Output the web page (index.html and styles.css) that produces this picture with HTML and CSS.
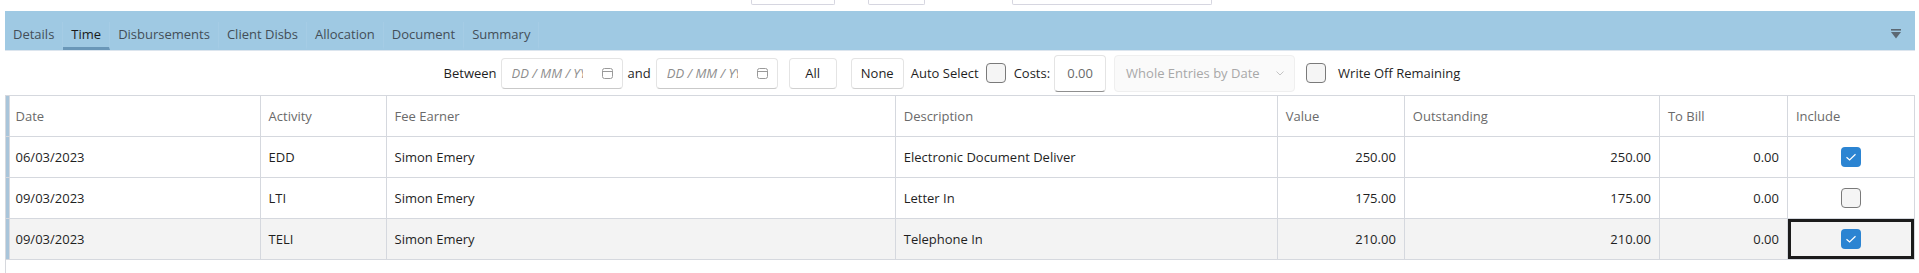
FILE: index.html
```html
<!DOCTYPE html>
<html>
<head>
<meta charset="utf-8">
<link rel="stylesheet" href="styles.css">
</head>
<body>
<div class="page">
  <div class="topstrip">
    <span class="stub s1"></span><span class="stub s2"></span><span class="stub s3"></span>
  </div>
  <div class="tabbar">
    <nav class="tabs">
      <span class="tab">Details</span>
      <span class="tab active">Time</span>
      <span class="tab">Disbursements</span>
      <span class="tab">Client Disbs</span>
      <span class="tab">Allocation</span>
      <span class="tab">Document</span>
      <span class="tab">Summary</span>
    </nav>
    <svg class="menu-icon" width="10" height="10" viewBox="0 0 10 10"><rect x="0" y="0" width="10" height="1.6" fill="#5c6873"/><polygon points="0,3 10,3 5,9.5" fill="#5c6873"/></svg>
  </div>
  <div class="toolbar">
    <span class="lbl l-between">Between</span>
    <span class="date-input d1"><span class="ph">DD / MM / YYYY</span><svg class="cal" width="11" height="11" viewBox="0 0 11 11"><rect x="0.5" y="0.5" width="10" height="10" rx="2" fill="none" stroke="#9a9a9a"/><line x1="0.5" y1="3.5" x2="10.5" y2="3.5" stroke="#9a9a9a"/></svg></span>
    <span class="lbl l-and">and</span>
    <span class="date-input d2"><span class="ph">DD / MM / YYYY</span><svg class="cal" width="11" height="11" viewBox="0 0 11 11"><rect x="0.5" y="0.5" width="10" height="10" rx="2" fill="none" stroke="#9a9a9a"/><line x1="0.5" y1="3.5" x2="10.5" y2="3.5" stroke="#9a9a9a"/></svg></span>
    <button class="btn b-all">All</button>
    <button class="btn b-none">None</button>
    <span class="lbl l-auto">Auto Select</span>
    <span class="box tb-box auto-box"></span>
    <span class="lbl l-costs">Costs:</span>
    <span class="num-input">0.00</span>
    <span class="select">Whole Entries by Date<svg class="chev" width="8" height="5" viewBox="0 0 8 5"><polyline points="0.5,0.5 4,4 7.5,0.5" fill="none" stroke="#c4c4c4"/></svg></span>
    <span class="box tb-box wo-box"></span>
    <span class="lbl l-wo">Write Off Remaining</span>
  </div>
  <div class="grid">
    <table>
      <colgroup>
        <col class="c-ind"><col class="c-date"><col class="c-act"><col class="c-fee"><col class="c-desc"><col class="c-val"><col class="c-out"><col class="c-bill"><col class="c-inc">
      </colgroup>
      <thead>
        <tr><th class="ind"></th><th class="first">Date</th><th>Activity</th><th>Fee Earner</th><th>Description</th><th>Value</th><th>Outstanding</th><th>To Bill</th><th>Include</th></tr>
      </thead>
      <tbody>
        <tr><td class="ind"></td><td class="first">06/03/2023</td><td>EDD</td><td>Simon Emery</td><td>Electronic Document Deliver</td><td class="num">250.00</td><td class="num">250.00</td><td class="num">0.00</td><td class="inc"><span class="box checked"><svg width="20" height="20" viewBox="0 0 20 20"><polyline points="5.5,10.2 8.6,13 14.5,7.2" fill="none" stroke="#fff" stroke-width="1.2"/></svg></span></td></tr>
        <tr><td class="ind"></td><td class="first">09/03/2023</td><td>LTI</td><td>Simon Emery</td><td>Letter In</td><td class="num">175.00</td><td class="num">175.00</td><td class="num">0.00</td><td class="inc"><span class="box"></span></td></tr>
        <tr class="hover"><td class="ind"></td><td class="first">09/03/2023</td><td>TELI</td><td>Simon Emery</td><td>Telephone In</td><td class="num">210.00</td><td class="num">210.00</td><td class="num">0.00</td><td class="inc focus"><span class="box checked"><svg width="20" height="20" viewBox="0 0 20 20"><polyline points="5.5,10.2 8.6,13 14.5,7.2" fill="none" stroke="#fff" stroke-width="1.2"/></svg></span></td></tr>
      </tbody>
    </table>
  </div>
</div>
</body>
</html>
```
FILE: styles.css
```css
html, body {
  margin: 0;
  background: #fff;
}
body {
  font-family: "Open Sans", "Noto Sans", sans-serif;
  font-size: 13px;
  color: #1f1f1f;
}
.page {
  padding: 0 4px 0 5px;
}
.topstrip {
  height: 11px;
  display: flex;
  align-items: flex-start;
}
.stub {
  display: block;
  height: 5px;
  box-sizing: border-box;
  border: 1px solid #d6d6e0;
  border-top: none;
  border-radius: 0 0 2px 2px;
}
.s1 { margin-left: 746px; width: 84px; }
.s2 { margin-left: 33px; width: 57px; }
.s3 { margin-left: 87px; width: 200px; }

.tabbar {
  height: 39px;
  background: #9fc9e3;
  border-bottom: 1px solid #dce5ee;
  display: flex;
  align-items: flex-end;
  justify-content: space-between;
}
.tabs {
  display: flex;
  align-items: flex-end;
}
.tab {
  padding: 3px 8px 4px;
  line-height: 18px;
  border-bottom: 3px solid transparent;
  border-right: 1px solid #a5cce5;
  color: #434e58;
  white-space: nowrap;
}
.tab.active {
  color: #1a1a1a;
  border-bottom-color: #6a97b8;
}
.menu-icon {
  align-self: flex-start;
  margin-top: 18px;
  margin-right: 14px;
}

.toolbar {
  height: 44px;
  display: flex;
  align-items: center;
  justify-content: center;
  padding-right: 16px;
}
.lbl {
  color: #1f1f1f;
  white-space: nowrap;
  line-height: 18px;
}
.l-between { margin-right: 4px; }
.l-and { margin: 0 5px; }
.l-auto { margin: 0 7px; }
.l-costs { margin: 0 4px 0 8px; }
.l-wo { margin-left: 12px; }

.date-input {
  box-sizing: border-box;
  width: 122px;
  height: 31px;
  border: 1px solid #e4e4e4;
  border-bottom-color: #c9c9c9;
  border-radius: 4px;
  display: flex;
  align-items: center;
  padding: 0 9px 0 10px;
  background: #fff;
}
.ph {
  width: 71px;
  overflow: hidden;
  white-space: nowrap;
  font-style: italic;
  color: #8d8d8d;
}
.cal { margin-left: auto; }

.btn {
  box-sizing: border-box;
  height: 31px;
  border: 1px solid #e4e4e4;
  border-bottom-color: #d0d0d0;
  border-radius: 4px;
  background: #fff;
  font: inherit;
  color: #1f1f1f;
  padding: 0;
}
.b-all { width: 48px; margin-left: 11px; }
.b-none { width: 53px; margin-left: 14px; }

.box {
  display: inline-block;
  box-sizing: border-box;
  width: 20px;
  height: 20px;
  border: 1px solid #7a7a7a;
  border-radius: 4px;
  background: #f5f5f5;
  vertical-align: middle;
}
.box.checked {
  border: none;
  background: #2b84d2;
}
.box svg { display: block; }

.num-input {
  box-sizing: border-box;
  width: 52px;
  height: 37px;
  border: 1px solid #e4e4e4;
  border-bottom-color: #8f8f8f;
  border-radius: 4px;
  display: flex;
  align-items: center;
  justify-content: center;
  color: #6a6a6a;
}
.select {
  box-sizing: border-box;
  width: 181px;
  height: 37px;
  margin-left: 8px;
  border: 1px solid #efefef;
  border-radius: 4px;
  background: #fafafa;
  display: flex;
  align-items: center;
  padding: 0 10px 0 11px;
  color: #a8a8a8;
  white-space: nowrap;
}
.chev { margin-left: auto; }
.wo-box { margin-left: 11px; }

.grid {
  border-left: 1px solid #d6d8dd;
  min-height: 178px;
}
table {
  border-collapse: collapse;
  table-layout: fixed;
  width: 1909px;
}
.c-ind { width: 3px; }
.c-date { width: 251px; }
.c-act { width: 126px; }
.c-fee { width: 509px; }
.c-desc { width: 382px; }
.c-val { width: 127px; }
.c-out { width: 255px; }
.c-bill { width: 128px; }
.c-inc { width: 127px; }
th, td {
  border: 1px solid #d5d8de;
  padding: 0 8px 0 8px;
  height: 40px;
  white-space: nowrap;
  overflow: hidden;
  text-align: left;
  font-weight: normal;
}
th.first, td.first { padding-left: 6px; }
th {
  color: #6a6a6a;
}
th.ind, td.ind {
  padding: 0;
  background: #a9c5da;
  border-left: none;
  border-right: none;
}
td.num { text-align: right; }
td.inc { text-align: center; padding: 0; }
tr.hover td { background: #f3f3f3; }
tr.hover td.ind { background: #a9c5da; }
td.focus {
  box-shadow: inset 0 0 0 3px #1b1b1b;
}
```
